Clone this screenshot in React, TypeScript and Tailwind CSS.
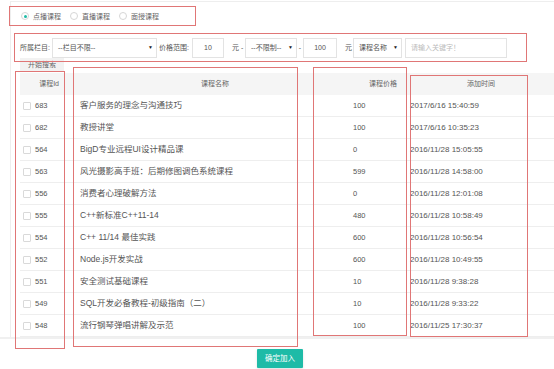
import React from 'react';

interface Course {
  id: number;
  name: string;
  price: number;
  time: string;
}

const courses: Course[] = [
  { id: 683, name: '客户服务的理念与沟通技巧', price: 100, time: '2017/6/16 15:40:59' },
  { id: 682, name: '教授讲堂', price: 100, time: '2017/6/16 10:35:23' },
  { id: 564, name: 'BigD专业远程UI设计精品课', price: 0, time: '2016/11/28 15:05:55' },
  { id: 563, name: '风光摄影高手班：后期修图调色系统课程', price: 599, time: '2016/11/28 14:58:00' },
  { id: 556, name: '消费者心理破解方法', price: 0, time: '2016/11/28 12:01:08' },
  { id: 555, name: 'C++新标准C++11-14', price: 480, time: '2016/11/28 10:58:49' },
  { id: 554, name: 'C++ 11/14 最佳实践', price: 600, time: '2016/11/28 10:56:54' },
  { id: 552, name: 'Node.js开发实战', price: 600, time: '2016/11/28 10:49:55' },
  { id: 551, name: '安全测试基础课程', price: 10, time: '2016/11/28 9:38:28' },
  { id: 549, name: 'SQL开发必备教程-初级指南（二）', price: 10, time: '2016/11/28 9:33:22' },
  { id: 548, name: '流行钢琴弹唱讲解及示范', price: 100, time: '2016/11/25 17:30:37' },
];

function Radio({ label, checked }: { label: string; checked?: boolean }) {
  return (
    <div className="flex items-center">
      <span className="w-[8px] h-[8px] rounded-full border border-[#d6d6d6] flex items-center justify-center bg-white">
        {checked && <span className="w-[3px] h-[3px] rounded-full bg-[#1ebba7]" />}
      </span>
      <span className="ml-[4px] text-[7px] text-[#666] leading-none">{label}</span>
    </div>
  );
}

function Select({ text, w }: { text: string; w: string }) {
  return (
    <div className={`${w} h-[20px] border border-[#e3e3e3] bg-white flex items-center justify-between pl-[5px] pr-[3px] text-[7px] text-[#555]`}>
      <span>{text}</span>
      <span className="text-[5px] text-[#222]">▼</span>
    </div>
  );
}

export default function App() {
  return (
    <div className="relative w-[554px] h-[369px] overflow-hidden bg-white font-['Liberation_Sans','Noto_Sans_CJK_SC',sans-serif]">
      <div className="ml-[10px] mt-px border-l border-t border-[#eeeeee]">
        {/* course type */}
        <div className="flex items-center h-[12px] mt-[8px] pl-[10px] gap-[9px]">
          <Radio label="点播课程" checked />
          <Radio label="直播课程" />
          <Radio label="面授课程" />
        </div>

        {/* filters */}
        <div className="flex items-center h-[20px] mt-[16px] pl-[9px] text-[7px] text-[#555]">
          <span className="w-[32px]">所属栏目:</span>
          <Select text="--栏目不限--" w="w-[105px]" />
          <span className="w-[35px] pl-[2px]">价格范围:</span>
          <div className="w-[32px] h-[20px] border border-[#e3e3e3] flex items-center justify-center">10</div>
          <span className="w-[21px] pl-[8px]">元 -</span>
          <Select text="--不限制--" w="w-[52px]" />
          <span className="w-[6px] text-center">-</span>
          <div className="w-[34px] h-[20px] border border-[#e3e3e3] flex items-center justify-center">100</div>
          <span className="w-[16px] pl-[8px]">元</span>
          <Select text="课程名称" w="w-[49px]" />
          <div className="ml-[3px] w-[102px] h-[20px] border border-[#e3e3e3] flex items-center pl-[5px] text-[#bbb]">
            请输入关键字！
          </div>
        </div>

        <div className="ml-[9px] w-[44px] h-[14px] bg-[#f2f2f2] flex items-center justify-center text-[7px] text-[#666]">
          开始搜索
        </div>

        {/* table */}
        <div className="ml-[9px] mt-px">
          <div className="flex items-center h-[22px] bg-[#f5f5f5] text-[7px] text-[#666]">
            <span className="w-[39px] text-right">课程Id</span>
            <span className="w-[170px] text-right">课程名称</span>
            <span className="w-[168px] text-right">课程价格</span>
            <span className="w-[98px] text-right">添加时间</span>
          </div>
          {courses.map((c) => (
            <div key={c.id} className="flex items-center h-[22px] border-b border-[#eeeeee] text-[#555]">
              <div className="w-[60px] flex items-center pl-[3px]">
                <span className="w-[8px] h-[8px] border border-[#d9d9d9] rounded-[1px] bg-white" />
                <span className="ml-[4px] text-[7.5px]">{c.id}</span>
              </div>
              <span className="w-[273px] text-[8.5px] whitespace-nowrap">{c.name}</span>
              <span className="w-[57px] text-[7.5px]">{c.price}</span>
              <span className="text-[8px] whitespace-nowrap">{c.time}</span>
            </div>
          ))}
        </div>
      </div>

      <div className="border-t-2 border-[#f0f0f0] pl-[257px] pt-[5px]">
        <button className="w-[46px] h-[19px] bg-[#1ebba7] text-white text-[7.5px] rounded-[1px] shadow-sm">
          确定加入
        </button>
      </div>

      {/* red annotation boxes */}
      <div className="absolute left-[9px] top-[6px] w-[187px] h-[20px] border border-[#e07676]" />
      <div className="absolute left-[14px] top-[33px] w-[513px] h-[29px] border border-[#e07676]" />
      <div className="absolute left-[15px] top-[71px] w-[50px] h-[278px] border border-[#e07676]" />
      <div className="absolute left-[73px] top-[67px] w-[225px] h-[280px] border border-[#e07676]" />
      <div className="absolute left-[313px] top-[67px] w-[94px] h-[269px] border border-[#e07676]" />
      <div className="absolute left-[410px] top-[75px] w-[118px] h-[262px] border border-[#e07676]" />
    </div>
  );
}
